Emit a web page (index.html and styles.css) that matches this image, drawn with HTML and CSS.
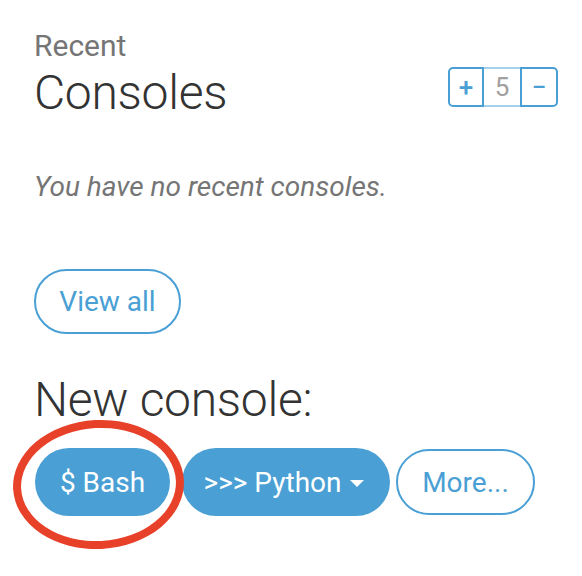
FILE: index.html
```html
<!DOCTYPE html>
<html>
<head>
<meta charset="utf-8">
<link rel="stylesheet" href="styles.css">
</head>
<body>
<div class="page">
  <div class="header">
    <div class="titles">
      <div class="kicker">Recent</div>
      <h1 class="title">Consoles</h1>
    </div>
    <div class="counter">
      <span class="cell plus">+</span>
      <span class="cell num">5</span>
      <span class="cell minus">&minus;</span>
    </div>
  </div>
  <p class="empty">You have no recent consoles.</p>
  <div class="viewall-row"><a class="btn btn-outline viewall">View all</a></div>
  <h2 class="title new-title">New console:</h2>
  <div class="btn-row">
    <div class="bash-wrap">
      <a class="btn btn-fill bash">$ Bash</a>
      <span class="circle"></span>
    </div>
    <a class="btn btn-fill python">&gt;&gt;&gt; Python <span class="caret"></span></a>
    <a class="btn btn-outline more">More...</a>
  </div>
</div>
</body>
</html>
```

FILE: styles.css
```css
html, body {
  margin: 0;
  padding: 0;
  background: #ffffff;
}
body {
  font-family: Roboto, "Liberation Sans", sans-serif;
  color: #333333;
}
.page {
  padding: 29px 24px 60px 34px;
}
.header {
  display: flex;
  justify-content: space-between;
  align-items: flex-end;
}
.kicker {
  font-size: 30px;
  line-height: 34px;
  color: #757575;
  height: 34px;
  margin-bottom: 2px;
}
.title {
  margin: 0;
  font-size: 48px;
  line-height: 56px;
  font-weight: 300;
  color: #333333;
  letter-spacing: -0.3px;
}
.counter {
  position: relative;
  display: flex;
  height: 40px;
  margin-bottom: 14px;
  box-sizing: border-box;
  border: 2px solid #4a9fd4;
  border-radius: 5px;
}
.cell {
  display: flex;
  align-items: center;
  justify-content: center;
  font-size: 26px;
  line-height: 1;
  color: #4a9fd4;
}
.plus {
  width: 32px;
  border-right: 2px solid #4a9fd4;
  font-weight: 500;
}
.num {
  width: 36px;
  color: #a0a0a0;
  position: relative;
}
.num::before, .num::after {
  content: "";
  position: absolute;
  left: 0;
  right: 0;
  height: 2px;
  background: #a6d0ec;
}
.num::before { top: -2px; }
.num::after { bottom: -2px; }
.minus {
  width: 34px;
  border-left: 2px solid #4a9fd4;
  font-weight: 500;
}
.empty {
  margin: 50px 0 0;
  font-size: 28px;
  line-height: 32px;
  font-style: italic;
  color: #757575;
}
.viewall-row {
  margin-top: 66px;
  display: flex;
}
.btn {
  display: inline-flex;
  align-items: center;
  justify-content: center;
  box-sizing: border-box;
  border-radius: 40px;
  font-size: 28px;
  text-decoration: none;
  white-space: nowrap;
}
.btn-outline {
  border: 2px solid #4a9fd4;
  color: #4a9fd4;
  background: #ffffff;
}
.btn-fill {
  background: #4a9fd4;
  color: #ffffff;
}
.viewall {
  width: 147px;
  height: 65px;
}
.new-title {
  margin-top: 38px;
}
.btn-row {
  margin-top: 20px;
  display: flex;
  align-items: center;
  margin-left: 1px;
}
.bash-wrap {
  position: relative;
  display: flex;
}
.bash {
  width: 135px;
  height: 68px;
}
.circle {
  position: absolute;
  left: -22px;
  top: -28px;
  width: 171px;
  height: 129px;
  box-sizing: border-box;
  border: 8px solid #e8412a;
  border-radius: 50%;
  transform: rotate(-3deg);
  z-index: 2;
}
.python {
  margin-left: 12px;
  width: 208px;
  height: 68px;
  gap: 8px;
  padding-right: 5px;
}
.caret {
  display: inline-block;
  width: 0;
  height: 0;
  border-left: 7px solid transparent;
  border-right: 7px solid transparent;
  border-top: 7px solid #ffffff;
  margin-top: 2px;
}
.more {
  margin-left: 6px;
  width: 139px;
  height: 66px;
}
```
